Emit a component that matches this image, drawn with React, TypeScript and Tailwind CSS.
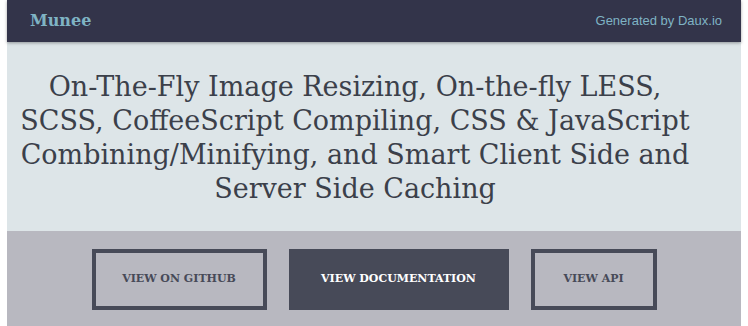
export default function App() {
  return (
    <div className="w-[748px] h-[326px] bg-white px-[7px] overflow-hidden">
      <div className="flex flex-col h-full">
        <header className="relative z-10 flex items-center justify-between h-[42px] bg-[#33344a] pl-[23px] pr-[19px] shadow-[0_1px_3px_rgba(0,0,0,0.35)]">
          <span className="text-[16px] font-bold text-[#7fb3c4] [font-family:'DejaVu_Serif',serif]">
            Munee
          </span>
          <span className="text-[13px] text-[#7fb3c4] [font-family:'Liberation_Sans',Arial,sans-serif]">
            Generated by Daux.io
          </span>
        </header>
        <section className="flex items-center justify-center h-[189px] bg-[#dde5e8] pr-[38px]">
          <h1 className="text-center text-[27px] leading-[34px] text-[#3b404a] font-light [font-family:'DejaVu_Serif',serif] mt-[2px] whitespace-nowrap">
            On-The-Fly Image Resizing, On-the-fly LESS,
            <br />
            SCSS, CoffeeScript Compiling, CSS &amp; JavaScript
            <br />
            Combining/Minifying, and Smart Client Side and
            <br />
            Server Side Caching
          </h1>
        </section>
        <section className="flex-1 flex justify-center gap-[22px] pt-[18px] bg-[#b8b8c0] [font-family:'DejaVu_Serif',serif]">
          <a className="flex items-center justify-center w-[175px] h-[61px] border-4 border-[#474a58] text-[#474a58] text-[11px] font-bold uppercase">
            View on GitHub
          </a>
          <a className="flex items-center justify-center w-[220px] h-[61px] bg-[#474a58] text-white text-[11px] font-bold uppercase">
            View Documentation
          </a>
          <a className="flex items-center justify-center w-[126px] h-[61px] border-4 border-[#474a58] text-[#474a58] text-[11px] font-bold uppercase">
            View API
          </a>
        </section>
      </div>
    </div>
  );
}
